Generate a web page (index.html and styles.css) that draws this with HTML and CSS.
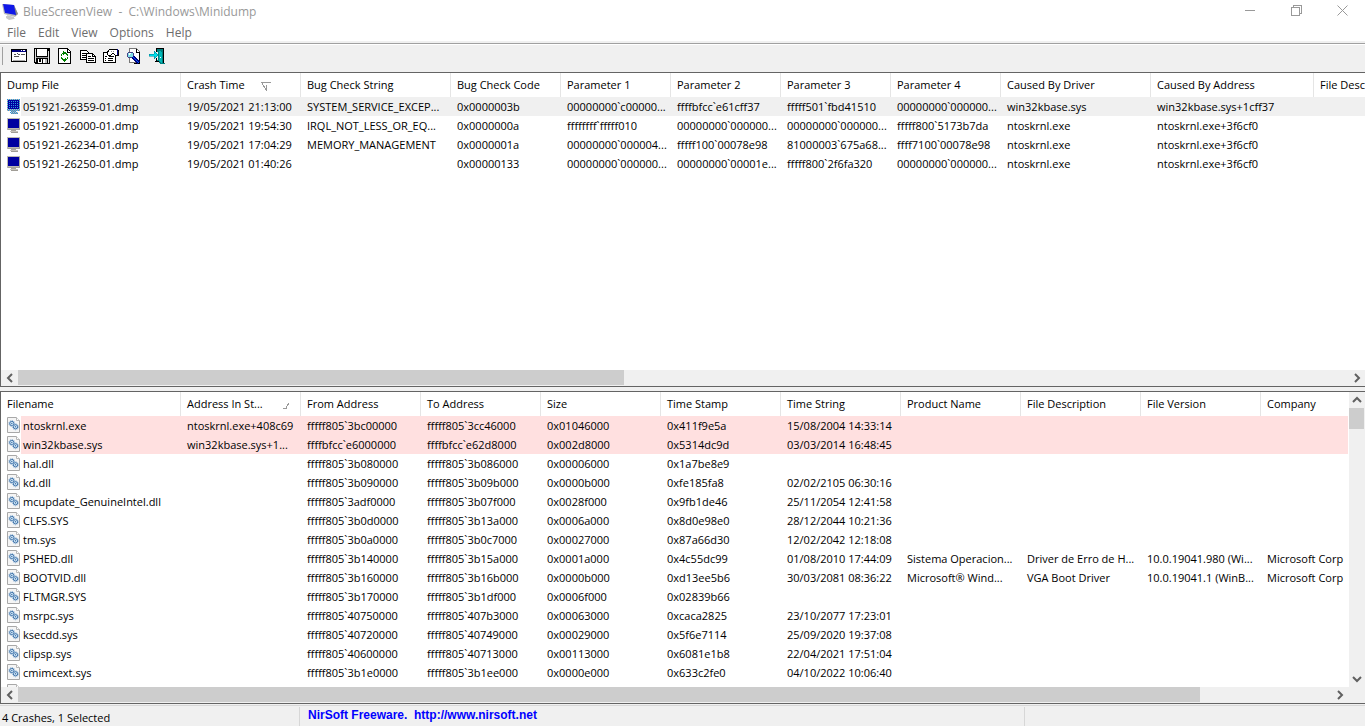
FILE: index.html
```html
<!DOCTYPE html>
<html lang="en">
<head>
<meta charset="utf-8">
<title>BlueScreenView - C:\Windows\Minidump</title>
<link rel="stylesheet" href="styles.css">
</head>
<body>
<svg class="sprites" aria-hidden="true">
  <symbol id="mon" viewBox="0 0 14 15">
    <path fill="#bcb9b2" d="M0 0h13v12H0z"/><path fill="#a5a29b" d="M12 1h1v11H1v-1h11z"/>
    <path fill="#0000a0" d="M1 1h11v9H1z"/><path fill="#aaa69e" d="M4 12h5v1H4z"/><path fill="#c8c4bc" d="M3 13h8v1H3z"/><path fill="#a09d96" d="M4 14h7v1H4z"/>
  </symbol>
  <symbol id="monsel" viewBox="0 0 14 15">
    <use href="#mon"/>
    <path stroke="#2f95dc" stroke-dasharray="1 1" fill="none" d="M0 .5h13M0 2.500h13M0 4.500h13M0 6.500h13M0 8.500h13M0 10.500h13M1 11.500h12M4 12.500h5M3 13.500h8M4 14.500h7"/>
  </symbol>
  <symbol id="dll" viewBox="0 0 13 16">
    <path fill="#f5f5f5" stroke="#a8a8a8" d="M.5.5h9l3 3v12H.5z"/><path fill="#fff" stroke="#b8b8b8" d="M9.500.5v3h3"/>
    <g fill="#c4dcf0" stroke="#3a6ea5"><circle cx="4.800" cy="6.500" r="2.200"/><circle cx="8.500" cy="9.800" r="2.200"/></g>
    <g fill="none" stroke="#8db4d8" stroke-dasharray="1 1"><circle cx="4.800" cy="6.500" r="3"/><circle cx="8.500" cy="9.800" r="3"/></g>
    <path fill="#2b6199" d="M4.300 6h1v1h-1zM8 9.300h1v1H8z"/>
  </symbol>
</svg>
<main class="window">
  <header class="titlebar">
    <svg class="logo" viewBox="0 0 16 17" aria-hidden="true"><path fill="#bbb" d="M0 1l12 1 4 9-3 3-11-3z"/><path fill="#888" d="M12 2l4 9-3 2z"/><path fill="#1018e8" d="M1 1l11 1 2 10-11-2z"/><path fill="#c8c8c8" d="M5 12l7 2v1H6zM4 13l9 2-1 1-5 1-3-2z"/></svg>
    <h1>BlueScreenView &nbsp;- &nbsp;C:\Windows\Minidump</h1>
    <div class="controls">
      <button aria-label="Minimize"><svg viewBox="0 0 11 11"><path d="M0 5.500h10"/></svg></button>
      <button aria-label="Restore"><svg viewBox="0 0 11 11"><path d="M.5 2.500h8v8h-8zM2.500 2V.5h8v8H9"/></svg></button>
      <button aria-label="Close"><svg class="smooth" viewBox="0 0 11 11"><path d="M.5.5l10 10m0-10l-10 10"/></svg></button>
    </div>
  </header>
  <nav class="menu"><button>File</button><button>Edit</button><button>View</button><button>Options</button><button>Help</button></nav>
  <div class="toolbar" role="toolbar" aria-label="Main toolbar">
    <button aria-label="Advanced options"><svg viewBox="0 0 16 16"><path fill="#fff" stroke="#000" d="M.5 1.500h15v12H.5z"/><path fill="#000080" d="M1 2h14v2H1z"/><path fill="#fff" d="M10 2h1v1h-1zM12 2h2v1h-2z"/><path fill="#555" d="M3 6h2v1H3zM6 5h1v1H6zM7 6h2v1H7zM10 6h4v1h-4zM3 8h5v1H3z"/><path fill="#aaa" d="M2 12h12v1H2z"/></svg></button>
    <button aria-label="Save"><svg viewBox="0 0 16 16"><path fill="#000" d="M0 0h16v16H1l-1-1z"/><path fill="#ddd" d="M1 1h1v13H1zM14 3h1v12h-1z"/><path fill="#fff" d="M3 1h10v7H3z"/><path fill="#999" d="M2 9h12v1H2z"/><path fill="#fff" d="M4 11h7v4H4z"/><path fill="#000" d="M5 11h2v3H5zM8 11h1v4H8z"/><path fill="#bbb" d="M11 11h2v4h-2z"/></svg></button>
    <button aria-label="Refresh"><svg viewBox="0 0 16 16"><path fill="#fff" stroke="#000" d="M1.500.5h9l3 3v12h-12z"/><path fill="none" stroke="#000" d="M10.500 1v3h3"/><path fill="#008000" d="M6 3h1v1h2v1h1v1h1v2h-1V7H9V6H7v1H6V6H5V5h1zM4 6h1v2H4zM4 9h1v1h1v1h2v-1h1v1h1v1H9v1H8v1H7v-1H6v-1H5v-1H4zM10 9h1v2h-1z"/></svg></button>
    <button aria-label="Copy"><svg viewBox="0 0 16 16"><path fill="#fff" stroke="#000" d="M.5 2.500h6l2 2v7h-8z"/><path stroke="#000" d="M2 5.500h4M2 7.500h5M2 9.500h5"/><path fill="#fff" stroke="#000" d="M6.500 5.500h6l3 3v6h-9z"/><path stroke="#000" fill="none" d="M12.500 5v3h3M8 8.500h3M8 10.500h6M8 12.500h6"/></svg></button>
    <button aria-label="Properties"><svg viewBox="0 0 16 16"><path fill="#fff" stroke="#000" d="M1 4.500h11v10H.5v-10z"/><path fill="#fff" stroke="#000" d="M4 5l3-4h7l1 1v5h-3l-2-2-3 3-2-1z"/><path fill="#000080" d="M14 1h1v6h-1z"/><path stroke="#000" d="M2 8.500h2M6 8.500h5M2 10.500h1M5 10.500h5M2 12.500h1M5 12.500h5"/><path fill="#888" d="M8 3h1v1H8zM10 3h1v1h-1z"/></svg></button>
    <button aria-label="Find"><svg viewBox="0 0 16 16"><path fill="#fff" stroke="#777" d="M3.500.5h7l3 3v11h-10z"/><path fill="none" stroke="#000" d="M10.500 1v3h3v11H8"/><circle cx="4.500" cy="7" r="3" fill="#80e0e8" stroke="#448"/><path fill="#fff" d="M3 5h2v1H4v1H3z"/><path stroke="#000080" stroke-width="3" d="M7 9l6 6"/><path stroke="#0060ff" d="M7 9l6 6"/></svg></button>
    <button aria-label="Exit"><svg viewBox="0 0 16 16"><path fill="#008080" d="M7 0h8v15h1v1h-5l-2-3H7z"/><path fill="#f0f0f0" d="M7 4h2v8H7z"/><path fill="#000" d="M7 0h8v1H8v3H7zM14 1h1v14h-1zM7 10h1v3h2v1H6v-1h1z"/><path fill="#00b8b8" d="M9 2l4 2v11l-3-2V3z"/><path fill="#fff" d="M11 9h1v1h-1z"/><path fill="#00dce8" stroke="#007c90" stroke-width=".5" d="M0 6h5V3l4 4-4 4V8H0z"/></svg></button>
  </div>
  <section class="pane crashes">
    <div class="view">
      <table>
        <colgroup><col class="w180"><col class="w120"><col class="w150"><col class="w110"><col class="w110"><col class="w110"><col class="w110"><col class="w110"><col class="w150"><col class="w163"><col></colgroup>
        <thead><tr><th>Dump File</th><th>Crash Time<svg class="desc" viewBox="0 0 11 9"><path d="M0 .5h10M1 1l4 7V3"/></svg></th><th>Bug Check String</th><th>Bug Check Code</th><th>Parameter 1</th><th>Parameter 2</th><th>Parameter 3</th><th>Parameter 4</th><th>Caused By Driver</th><th>Caused By Address</th><th>File Desc</th></tr></thead>
        <tbody>
          <tr class="selected"><td><svg class="mon"><use href="#monsel"/></svg>051921-26359-01.dmp</td><td>19/05/2021 21:13:00</td><td>SYSTEM_SERVICE_EXCEP...</td><td>0x0000003b</td><td>00000000`c00000...</td><td>ffffbfcc`e61cff37</td><td>fffff501`fbd41510</td><td>00000000`000000...</td><td>win32kbase.sys</td><td>win32kbase.sys+1cff37</td><td></td></tr>
          <tr><td><svg class="mon"><use href="#mon"/></svg>051921-26000-01.dmp</td><td>19/05/2021 19:54:30</td><td>IRQL_NOT_LESS_OR_EQ...</td><td>0x0000000a</td><td>ffffffff`fffff010</td><td>00000000`000000...</td><td>00000000`000000...</td><td>fffff800`5173b7da</td><td>ntoskrnl.exe</td><td>ntoskrnl.exe+3f6cf0</td><td></td></tr>
          <tr><td><svg class="mon"><use href="#mon"/></svg>051921-26234-01.dmp</td><td>19/05/2021 17:04:29</td><td>MEMORY_MANAGEMENT</td><td>0x0000001a</td><td>00000000`000004...</td><td>fffff100`00078e98</td><td>81000003`675a68...</td><td>ffff7100`00078e98</td><td>ntoskrnl.exe</td><td>ntoskrnl.exe+3f6cf0</td><td></td></tr>
          <tr><td><svg class="mon"><use href="#mon"/></svg>051921-26250-01.dmp</td><td>19/05/2021 01:40:26</td><td></td><td>0x00000133</td><td>00000000`000000...</td><td>00000000`00001e...</td><td>fffff800`2f6fa320</td><td>00000000`000000...</td><td>ntoskrnl.exe</td><td>ntoskrnl.exe+3f6cf0</td><td></td></tr>
        </tbody>
      </table>
    </div>
    <div class="hscroll"><button aria-label="Scroll left"><svg viewBox="0 0 8 8"><path d="M6 0L2 4l4 4"/></svg></button><div class="track"><div class="thumb first"></div></div><button aria-label="Scroll right"><svg viewBox="0 0 8 8"><path d="M2 0l4 4-4 4"/></svg></button></div>
  </section>
  <section class="pane drivers">
    <div class="row">
      <div class="view">
        <table>
          <colgroup><col class="w180"><col class="w120"><col class="w120"><col class="w120"><col class="w120"><col class="w120"><col class="w120"><col class="w120"><col class="w120"><col class="w120"><col></colgroup>
          <thead><tr><th>Filename</th><th>Address In St...<svg class="asc" viewBox="0 0 7 7"><path d="M0 6.500h4M3 6l3-5"/></svg></th><th>From Address</th><th>To Address</th><th>Size</th><th>Time Stamp</th><th>Time String</th><th>Product Name</th><th>File Description</th><th>File Version</th><th>Company</th></tr></thead>
          <tbody>
            <tr class="hit"><td><svg class="dll"><use href="#dll"/></svg>ntoskrnl.exe</td><td>ntoskrnl.exe+408c69</td><td>fffff805`3bc00000</td><td>fffff805`3cc46000</td><td>0x01046000</td><td>0x411f9e5a</td><td>15/08/2004 14:33:14</td><td></td><td></td><td></td><td></td></tr>
            <tr class="hit"><td><svg class="dll"><use href="#dll"/></svg>win32kbase.sys</td><td>win32kbase.sys+1...</td><td>ffffbfcc`e6000000</td><td>ffffbfcc`e62d8000</td><td>0x002d8000</td><td>0x5314dc9d</td><td>03/03/2014 16:48:45</td><td></td><td></td><td></td><td></td></tr>
            <tr><td><svg class="dll"><use href="#dll"/></svg>hal.dll</td><td></td><td>fffff805`3b080000</td><td>fffff805`3b086000</td><td>0x00006000</td><td>0x1a7be8e9</td><td></td><td></td><td></td><td></td><td></td></tr>
            <tr><td><svg class="dll"><use href="#dll"/></svg>kd.dll</td><td></td><td>fffff805`3b090000</td><td>fffff805`3b09b000</td><td>0x0000b000</td><td>0xfe185fa8</td><td>02/02/2105 06:30:16</td><td></td><td></td><td></td><td></td></tr>
            <tr><td><svg class="dll"><use href="#dll"/></svg>mcupdate_GenuineIntel.dll</td><td></td><td>fffff805`3adf0000</td><td>fffff805`3b07f000</td><td>0x0028f000</td><td>0x9fb1de46</td><td>25/11/2054 12:41:58</td><td></td><td></td><td></td><td></td></tr>
            <tr><td><svg class="dll"><use href="#dll"/></svg>CLFS.SYS</td><td></td><td>fffff805`3b0d0000</td><td>fffff805`3b13a000</td><td>0x0006a000</td><td>0x8d0e98e0</td><td>28/12/2044 10:21:36</td><td></td><td></td><td></td><td></td></tr>
            <tr><td><svg class="dll"><use href="#dll"/></svg>tm.sys</td><td></td><td>fffff805`3b0a0000</td><td>fffff805`3b0c7000</td><td>0x00027000</td><td>0x87a66d30</td><td>12/02/2042 12:18:08</td><td></td><td></td><td></td><td></td></tr>
            <tr><td><svg class="dll"><use href="#dll"/></svg>PSHED.dll</td><td></td><td>fffff805`3b140000</td><td>fffff805`3b15a000</td><td>0x0001a000</td><td>0x4c55dc99</td><td>01/08/2010 17:44:09</td><td>Sistema Operacion...</td><td>Driver de Erro de H...</td><td>10.0.19041.980 (Wi...</td><td>Microsoft Corp</td></tr>
            <tr><td><svg class="dll"><use href="#dll"/></svg>BOOTVID.dll</td><td></td><td>fffff805`3b160000</td><td>fffff805`3b16b000</td><td>0x0000b000</td><td>0xd13ee5b6</td><td>30/03/2081 08:36:22</td><td>Microsoft® Wind...</td><td>VGA Boot Driver</td><td>10.0.19041.1 (WinB...</td><td>Microsoft Corp</td></tr>
            <tr><td><svg class="dll"><use href="#dll"/></svg>FLTMGR.SYS</td><td></td><td>fffff805`3b170000</td><td>fffff805`3b1df000</td><td>0x0006f000</td><td>0x02839b66</td><td></td><td></td><td></td><td></td><td></td></tr>
            <tr><td><svg class="dll"><use href="#dll"/></svg>msrpc.sys</td><td></td><td>fffff805`40750000</td><td>fffff805`407b3000</td><td>0x00063000</td><td>0xcaca2825</td><td>23/10/2077 17:23:01</td><td></td><td></td><td></td><td></td></tr>
            <tr><td><svg class="dll"><use href="#dll"/></svg>ksecdd.sys</td><td></td><td>fffff805`40720000</td><td>fffff805`40749000</td><td>0x00029000</td><td>0x5f6e7114</td><td>25/09/2020 19:37:08</td><td></td><td></td><td></td><td></td></tr>
            <tr><td><svg class="dll"><use href="#dll"/></svg>clipsp.sys</td><td></td><td>fffff805`40600000</td><td>fffff805`40713000</td><td>0x00113000</td><td>0x6081e1b8</td><td>22/04/2021 17:51:04</td><td></td><td></td><td></td><td></td></tr>
            <tr><td><svg class="dll"><use href="#dll"/></svg>cmimcext.sys</td><td></td><td>fffff805`3b1e0000</td><td>fffff805`3b1ee000</td><td>0x0000e000</td><td>0x633c2fe0</td><td>04/10/2022 10:06:40</td><td></td><td></td><td></td><td></td></tr>
            <tr><td><svg class="dll"><use href="#dll"/></svg></td><td></td><td></td><td></td><td></td><td></td><td></td><td></td><td></td><td></td><td></td></tr>
          </tbody>
        </table>
      </div>
      <div class="vscroll"><button aria-label="Scroll up"><svg viewBox="0 0 8 8"><path d="M0 6l4-4 4 4"/></svg></button><div class="track"><div class="thumb"></div></div><button aria-label="Scroll down"><svg viewBox="0 0 8 8"><path d="M0 2l4 4 4-4"/></svg></button></div>
    </div>
    <div class="hscroll cornered"><button aria-label="Scroll left"><svg viewBox="0 0 8 8"><path d="M6 0L2 4l4 4"/></svg></button><div class="track"><div class="thumb second"></div></div><button aria-label="Scroll right"><svg viewBox="0 0 8 8"><path d="M2 0l4 4-4 4"/></svg></button></div>
  </section>
  <footer class="status"><span class="count">4 Crashes, 1 Selected</span><a href="http://www.nirsoft.net">NirSoft Freeware. &nbsp;http://www.nirsoft.net</a><span class="grip"></span></footer>
</main>
</body>
</html>
```
FILE: styles.css
```css
* { box-sizing: border-box; }
body { margin: 0; background: #f0f0f0; color: #000; font: 11px/16px "Open Sans", "Noto Sans", sans-serif; }
button { margin: 0; padding: 0; border: 0; background: none; color: inherit; font: inherit; }
svg { display: block; flex: none; shape-rendering: crispEdges; }
.sprites { position: absolute; width: 0; height: 0; }
.window { display: flex; flex-direction: column; height: 100vh; overflow: hidden; }

.titlebar { display: flex; flex: none; align-items: center; height: 23px; padding-left: 2px; background: #fff; color: #999; }
.logo { width: 16px; height: 17px; margin-right: 5px; shape-rendering: auto; }
.titlebar h1 { flex: 1; margin: 0; font-size: 12px; font-weight: 400; white-space: nowrap; }
.controls { display: flex; align-self: flex-start; }
.controls button { display: grid; place-items: center; width: 46px; height: 21px; }
.controls svg { width: 11px; height: 11px; fill: none; stroke: #999; }
.controls .smooth { shape-rendering: auto; }

.menu { display: flex; flex: none; height: 18px; padding-left: 1px; background: #fff; color: #6d6d6d; font-size: 12px; }
.menu button { height: 20px; padding: 0 6px; }

.toolbar { display: flex; flex: none; align-items: center; height: 31px; padding: 0 2px 1px; background: linear-gradient(#f0f0f0 2px, #a0a0a0 2px, #a0a0a0 3px, #fff 3px, #fff 4px, #f0f0f0 4px); }
.toolbar::before { content: ""; width: 1px; height: 18px; margin-right: 4px; background: #a0a0a0; }
.toolbar button { display: grid; place-items: center; width: 23px; height: 22px; }
.toolbar svg { width: 16px; height: 16px; }

.pane { display: flex; flex-direction: column; min-height: 0; border: solid #646464; border-width: 1px 0 1px 1px; background: #fff; }
.crashes { flex: 315 1 0; margin-bottom: 4px; }
.drivers { flex: 313 1 0; }
.row { display: flex; flex: 1; min-height: 0; }
.view { flex: 1; min-width: 0; min-height: 0; overflow: hidden; }

table { width: 100%; border-collapse: separate; border-spacing: 0; table-layout: fixed; }
.w110 { width: 110px; }
.w120 { width: 120px; }
.w150 { width: 150px; }
.w163 { width: 163px; }
.w180 { width: 180px; }
th, td { overflow: hidden; padding: 0 0 0 6px; text-align: left; white-space: nowrap; font-weight: 400; }
th { height: 24px; border-right: 1px solid #e5e5e5; }
th:last-child { border-right: 0; }
td { height: 19px; line-height: 19px; }
td svg { float: left; }
.mon { width: 14px; height: 15px; margin: 2px 2px 0 0; }
.dll { width: 13px; height: 16px; margin: 1px 3px 0 0; shape-rendering: auto; }
.selected td { background: #f0f0f0; }
.hit td { background: #ffe0e0; }
.selected td:first-child { background: linear-gradient(90deg, #fff 20px, #f0f0f0 20px); }
.hit td:first-child { background: linear-gradient(90deg, #fff 20px, #ffe0e0 20px); }
.desc, .asc { display: inline-block; fill: none; stroke: #999; margin-left: 16px; vertical-align: middle; }
.desc { width: 11px; height: 9px; }
.asc { width: 7px; height: 7px; margin-left: 20px; }

.hscroll, .vscroll { display: flex; flex: none; background: #f0f0f0; }
.hscroll { height: 16px; }
.cornered { padding-right: 17px; }
.vscroll { flex-direction: column; width: 17px; border-left: 1px solid #fff; }
.hscroll button, .vscroll button { display: grid; flex: none; place-items: center; width: 17px; height: 16px; }
.hscroll button { height: 15px; }
.vscroll button { width: 15px; }
.hscroll .track, .vscroll .track { flex: 1; min-width: 0; }
.hscroll svg, .vscroll svg { width: 8px; height: 8px; overflow: visible; fill: none; stroke: #606060; stroke-width: 2; shape-rendering: auto; }
.thumb { height: 100%; background: #cdcdcd; }
.vscroll .thumb { width: 15px; height: 21px; }
.hscroll .thumb { height: 15px; }
.first { width: 45.6%; }
.second { width: 90%; }

.status { display: flex; flex: none; align-items: stretch; height: 22px; padding-top: 3px; background: linear-gradient(#f0f0f0 1px, #d7d7d7 1px, #d7d7d7 2px, #f0f0f0 2px); }
.count { width: 300px; padding: 3px 0 0 2px; border-right: 1px solid #d7d7d7; }
.status a { flex: 1; padding: 0 0 0 8px; color: #00f; font: bold 12px/16px "Liberation Sans", Arial, sans-serif; text-decoration: none; white-space: nowrap; }
.grip { width: 25%; border-left: 1px solid #d7d7d7; }
```
